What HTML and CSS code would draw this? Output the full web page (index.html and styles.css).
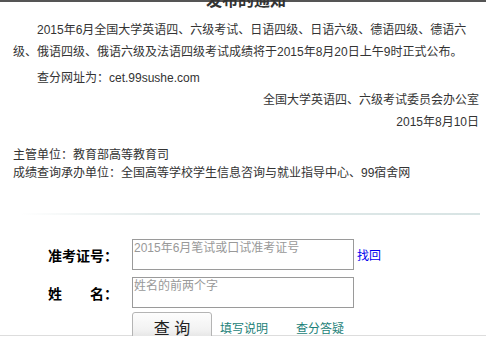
FILE: index.html
```html
<!DOCTYPE html>
<html lang="zh-CN">
<head>
    <meta charset="UTF-8">
    <meta name="viewport" content="width=device-width, initial-scale=1.0">
    <title>全国大学英语四、六级考试成绩查询</title>
    <link rel="stylesheet" href="styles.css">
</head>
<body>
    <div class="topbar"></div>
    <div class="notice">
        <h3 class="title">关于2015年6月全国大学英语四、六级考试成绩<br>发布的通知</h3>
        <p class="para first">2015年6月全国大学英语四、六级考试、日语四级、日语六级、德语四级、德语六级、俄语四级、俄语六级及法语四级考试成绩将于2015年8月20日上午9时正式公布。</p>
        <p class="para">查分网址为：cet.99sushe.com</p>
        <p class="sign">全国大学英语四、六级考试委员会办公室</p>
        <p class="sign">2015年8月10日</p>
        <div class="units">
            <p>主管单位：教育部高等教育司</p>
            <p>成绩查询承办单位：全国高等学校学生信息咨询与就业指导中心、99宿舍网</p>
        </div>
    </div>
    <div class="divider"></div>
    <form class="query" onsubmit="return false">
        <div class="row">
            <label class="label" for="zkzh">准考证号：</label>
            <input type="text" id="zkzh" class="field" placeholder="2015年6月笔试或口试准考证号">
            <a class="link-blue" href="#">找回</a>
        </div>
        <div class="row">
            <label class="label" for="xm">姓&emsp;&emsp;名：</label>
            <input type="text" id="xm" class="field" placeholder="姓名的前两个字">
        </div>
        <div class="row actions">
            <button type="submit" class="btn">查 询</button>
            <a class="link-teal" href="#">填写说明</a>
            <a class="link-teal" href="#">查分答疑</a>
        </div>
    </form>
    <div class="bottomline"></div>
</body>
</html>
```

FILE: styles.css
```css
body {
    margin: 0;
    font-family: "Liberation Sans", "Noto Sans CJK SC", sans-serif;
    font-size: 12px;
    color: #333;
    background: #fff;
    overflow: hidden;
}
.topbar {
    height: 2px;
    background-color: #555;
}
.notice {
    padding: 0 7px 0 13px;
}
.title {
    margin: -37px 0 6px;
    font-size: 16px;
    line-height: 24px;
    font-weight: bold;
    text-align: center;
    color: #333;
}
.notice p {
    margin: 0;
}
.para {
    line-height: 22px;
    text-indent: 2em;
}
.para.first {
    margin-bottom: 4px;
}
.sign {
    line-height: 22px;
    text-align: right;
}
.sign:first-of-type {
    margin-top: 2px;
}
.units {
    margin-top: 13px;
    line-height: 18px;
}
.divider {
    height: 2px;
    margin: 31px 6px 0 20px;
    background: linear-gradient(to right, #fff, #e2eaea 30%, #d8e4e4);
}
.query {
    margin: 24px 0 0;
    padding-left: 48px;
}
.row {
    display: flex;
    align-items: center;
    margin-bottom: 7px;
}
.label {
    width: 70px;
    margin-right: 14px;
    font-size: 14px;
    font-weight: bold;
    color: #000;
    white-space: nowrap;
}
.field {
    box-sizing: border-box;
    width: 222px;
    height: 31px;
    margin: 0;
    padding: 0 1px 14px;
    border: 1px solid #9a9a9a;
    font-family: "Liberation Sans", "Noto Sans CJK SC", sans-serif;
    font-size: 12px;
    line-height: 15px;
    outline: none;
}
.field::placeholder {
    color: #999;
}
.link-blue {
    margin-left: 3px;
    color: #0000ee;
    text-decoration: none;
}
.actions {
    margin: -3px 0 0 84px;
}
.btn {
    box-sizing: border-box;
    width: 80px;
    height: 30px;
    padding: 0;
    border: 1px solid #b4b4b4;
    border-radius: 3px;
    background: linear-gradient(#fdfdfd, #f2f2f2 60%, #dedede);
    font-family: "Liberation Sans", "Noto Sans CJK SC", sans-serif;
    font-size: 16px;
    color: #222;
    cursor: pointer;
}
.link-teal {
    margin-left: 8px;
    margin-right: 20px;
    color: #1b7f78;
    text-decoration: none;
}
.link-teal + .link-teal {
    margin-left: 8px;
}
.bottomline {
    height: 1px;
    margin-top: -7px;
    background-color: #ddd;
}
```
